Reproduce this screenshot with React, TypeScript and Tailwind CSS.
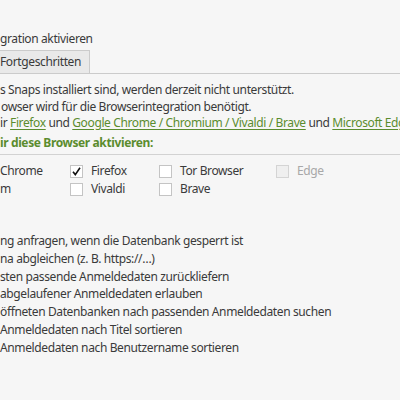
import React from 'react';

const Box = ({ checked = false, disabled = false }: { checked?: boolean; disabled?: boolean }) => (
  <span
    className={`flex h-[13px] w-[13px] shrink-0 items-center justify-center border ${
      disabled ? 'border-[#d4d4d4] bg-[#efefef]' : 'border-[#c4c4c4] bg-white'
    }`}
  >
    {checked && (
      <svg width="11" height="11" viewBox="0 0 11 11">
        <path d="M2 5.8 L4.3 8.6 L9 1.8" fill="none" stroke="#111" strokeWidth="1.6" />
      </svg>
    )}
  </span>
);

const Link = ({ children }: { children: React.ReactNode }) => (
  <span className="text-[#5b8c2e] underline decoration-[#5b8c2e] underline-offset-2">{children}</span>
);

const options = [
  'ng anfragen, wenn die Datenbank gesperrt ist',
  'na abgleichen (z. B. https://…)',
  'sten passende Anmeldedaten zurückliefern',
  'abgelaufener Anmeldedaten erlauben',
  'öffneten Datenbanken nach passenden Anmeldedaten suchen',
  'Anmeldedaten nach Titel sortieren',
  'Anmeldedaten nach Benutzername sortieren',
];

export default function App() {
  return (
    <div
      className="h-[400px] w-[400px] overflow-hidden bg-[#f6f6f6] text-[12px] tracking-[-0.38px] text-[#3a3a3a]"
      style={{ fontFamily: '"Noto Sans", sans-serif' }}
    >
      <div className="mt-[30px] flex h-[18px] items-center whitespace-nowrap">gration aktivieren</div>

      {/* Tabs */}
      <div className="mt-[2px] flex border-b border-[#cbcbcb]">
        <div className="flex h-[23px] w-[90px] items-center border border-b-0 border-l-0 border-[#cbcbcb] bg-[#e9e9e9]">
          Fortgeschritten
        </div>
      </div>

      <div className="mt-[7px] flex h-[18px] items-center whitespace-nowrap">
        s Snaps installiert sind, werden derzeit nicht unterstützt.
      </div>
      <div className="flex h-[16px] items-center whitespace-nowrap pl-[1px]">
        owser wird für die Browserintegration benötigt.
      </div>
      <div className="flex h-[16px] items-center whitespace-nowrap">
        ir&nbsp;<Link>Firefox</Link>&nbsp;und&nbsp;<Link>Google Chrome / Chromium / Vivaldi / Brave</Link>&nbsp;und&nbsp;
        <Link>Microsoft Edge</Link>
      </div>
      <div className="mt-[3px] flex h-[18px] items-center whitespace-nowrap font-bold text-[#5b8c2e]">
        ir diese Browser aktivieren:
      </div>
      <div className="mt-[2px] border-t border-[#d2d2d2]" />

      {/* Browser grid */}
      <div className="mt-[7px] grid grid-cols-[70px_89px_117px_100px]">
        <div className="flex h-[18px] items-center">Chrome</div>
        <div className="flex h-[18px] items-center gap-[8px]">
          <Box checked />
          Firefox
        </div>
        <div className="flex h-[18px] items-center gap-[8px]">
          <Box />
          Tor Browser
        </div>
        <div className="flex h-[18px] items-center gap-[8px] text-[#a8a8a8]">
          <Box disabled />
          Edge
        </div>
        <div className="flex h-[18px] items-center">m</div>
        <div className="flex h-[18px] items-center gap-[8px]">
          <Box />
          Vivaldi
        </div>
        <div className="flex h-[18px] items-center gap-[8px]">
          <Box />
          Brave
        </div>
      </div>

      {/* Options */}
      <div className="mt-[34px] flex flex-col">
        {options.map((o) => (
          <div key={o} className="flex h-[17.8px] items-center whitespace-nowrap">
            {o}
          </div>
        ))}
      </div>
    </div>
  );
}
